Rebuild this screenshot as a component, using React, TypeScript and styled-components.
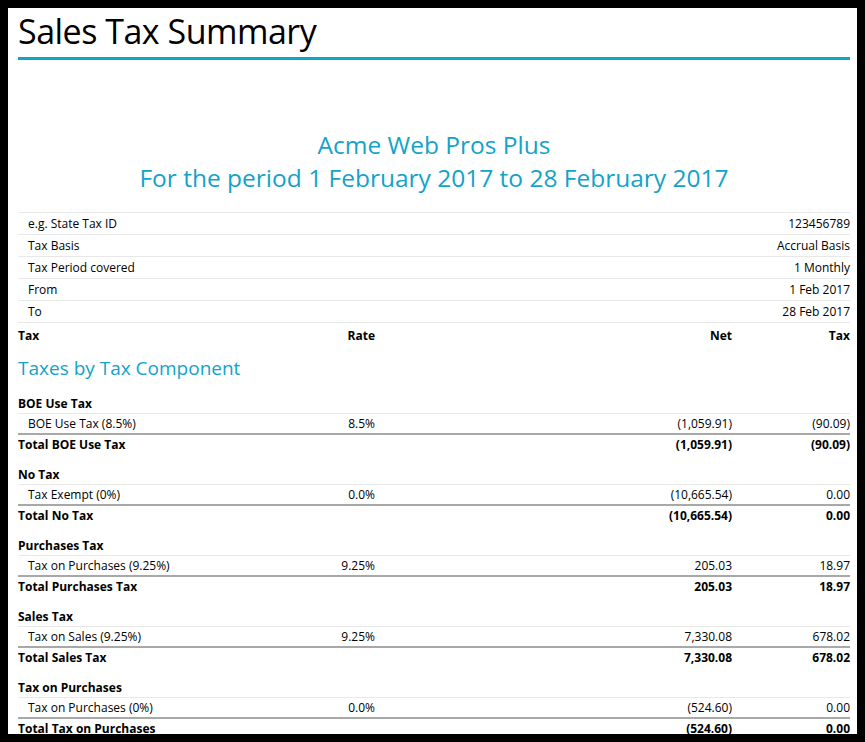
import * as React from 'react'
import styled, { createGlobalStyle } from 'styled-components'

const Global = createGlobalStyle`
  html, body { margin: 0; background: #000; }
  body { padding: 8px 8px 8px 8px; font-family: "Open Sans", "Noto Sans", sans-serif; color: #000; }
`

const Page = styled.div`
  background: #fff;
  height: 726px;
  width: 849px;
  padding: 0 7px 0 10px;
  box-sizing: border-box;
  overflow: hidden;
`

const Title = styled.h1`
  margin: 0;
  padding-top: 1px;
  font-size: 34px;
  font-weight: 400;
  letter-spacing: -0.5px;
  line-height: 45px;
  border-bottom: 3px solid #0ea5cb;
  padding-bottom: 3px;
`

const Heading = styled.div`
  margin-top: 68px;
  text-align: center;
  color: #12a3c9;
  font-size: 24.5px;
  line-height: 33px;
  margin-bottom: 18px;
`

const InfoRow = styled.div`
  display: flex;
  justify-content: space-between;
  border-top: 1px solid #e8e8e8;
  font-size: 12px;
  height: 21px;
  line-height: 21px;
  padding-left: 10px;
`

const Grid = styled.div<{ $line?: 'light' | 'heavy' | 'none'; $bold?: boolean; $indent?: boolean }>`
  display: grid;
  grid-template-columns: 260px 97px 357px 118px;
  font-size: 12px;
  height: 19px;
  line-height: 19px;
  font-weight: ${p => (p.$bold ? 700 : 400)};
  border-top: ${p =>
    p.$line === 'heavy' ? '2px solid #a8a8a8' : p.$line === 'light' ? '1px solid #e8e8e8' : '1px solid transparent'};
  & > :first-child { padding-left: ${p => (p.$indent ? '10px' : '0')}; }
  & > :not(:first-child) { text-align: right; }
`

const HeaderRow = styled(Grid)`
  height: 24px;
  line-height: 24px;
  border-top: 1px solid #e8e8e8;
  padding-top: 1px;
`

const Section = styled.div`
  color: #12a3c9;
  font-size: 19px;
  margin: 7px 0 12px;
  line-height: 26px;
`

const Group = styled.div`
  margin-bottom: 10px;
`

const info = [
  ['e.g. State Tax ID', '123456789'],
  ['Tax Basis', 'Accrual Basis'],
  ['Tax Period covered', '1 Monthly'],
  ['From', '1 Feb 2017'],
  ['To', '28 Feb 2017'],
]

const groups = [
  ['BOE Use Tax', 'BOE Use Tax (8.5%)', '8.5%', '(1,059.91)', '(90.09)'],
  ['No Tax', 'Tax Exempt (0%)', '0.0%', '(10,665.54)', '0.00'],
  ['Purchases Tax', 'Tax on Purchases (9.25%)', '9.25%', '205.03', '18.97'],
  ['Sales Tax', 'Tax on Sales (9.25%)', '9.25%', '7,330.08', '678.02'],
  ['Tax on Purchases', 'Tax on Purchases (0%)', '0.0%', '(524.60)', '0.00'],
]

export default function App() {
  return (
    <>
      <Global />
      <Page>
        <Title>Sales Tax Summary</Title>
        <Heading>
          Acme Web Pros Plus
          <br />
          For the period 1 February 2017 to 28 February 2017
        </Heading>
        {info.map(([k, v]) => (
          <InfoRow key={k}>
            <span>{k}</span>
            <span>{v}</span>
          </InfoRow>
        ))}
        <HeaderRow $bold>
          <span>Tax</span>
          <span>Rate</span>
          <span>Net</span>
          <span>Tax</span>
        </HeaderRow>
        <Section>Taxes by Tax Component</Section>
        {groups.map(([g, name, rate, net, tax]) => (
          <Group key={g}>
            <Grid $bold $line="none">
              <span>{g}</span>
            </Grid>
            <Grid $line="light" $indent>
              <span>{name}</span>
              <span>{rate}</span>
              <span>{net}</span>
              <span>{tax}</span>
            </Grid>
            <Grid $line="heavy" $bold>
              <span>Total {g}</span>
              <span />
              <span>{net}</span>
              <span>{tax}</span>
            </Grid>
          </Group>
        ))}
      </Page>
    </>
  )
}
